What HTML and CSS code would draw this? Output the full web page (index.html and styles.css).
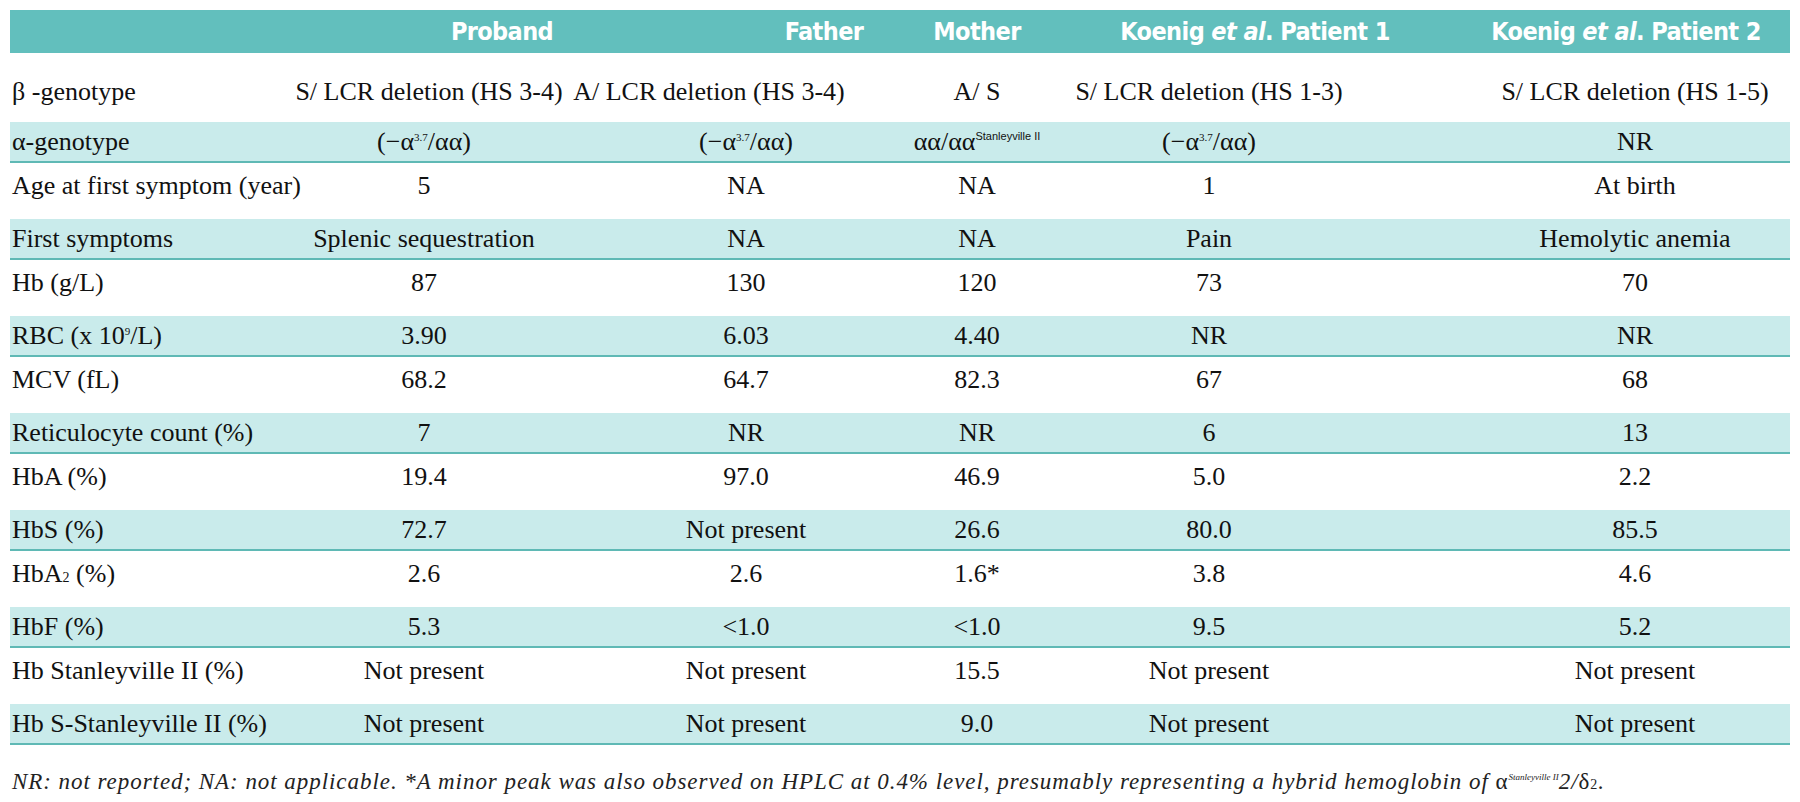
FILE: index.html
```html
<!DOCTYPE html>
<html lang="en">
<head>
<meta charset="utf-8">
<title>Table</title>
<link rel="stylesheet" href="styles.css">
</head>
<body>
<div class="page">
  <div class="table">
    <div class="row head">
      <div class="cell lab"></div>
      <div class="cell c1">Proband</div>
      <div class="cell c2">Father</div>
      <div class="cell c3">Mother</div>
      <div class="cell c4">Koenig <i>et al</i>. Patient 1</div>
      <div class="cell c5">Koenig <i>et al</i>. Patient 2</div>
    </div>
    <div class="row plain first">
      <div class="cell lab">β -genotype</div>
      <div class="cell c1 wide">S/ LCR deletion (HS 3-4)</div>
      <div class="cell c2 wide">A/ LCR deletion (HS 3-4)</div>
      <div class="cell c3">A/ S</div>
      <div class="cell c4">S/ LCR deletion (HS 1-3)</div>
      <div class="cell c5">S/ LCR deletion (HS 1-5)</div>
    </div>
    <div class="row shade">
      <div class="cell lab">α-genotype</div>
      <div class="cell c1">(−α<sup class="num">3.7</sup>/αα)</div>
      <div class="cell c2">(−α<sup class="num">3.7</sup>/αα)</div>
      <div class="cell c3">αα/αα<sup class="sans">Stanleyville II</sup></div>
      <div class="cell c4">(−α<sup class="num">3.7</sup>/αα)</div>
      <div class="cell c5">NR</div>
    </div>
    <div class="row plain">
      <div class="cell lab">Age at first symptom (year)</div>
      <div class="cell c1">5</div>
      <div class="cell c2">NA</div>
      <div class="cell c3">NA</div>
      <div class="cell c4">1</div>
      <div class="cell c5">At birth</div>
    </div>
    <div class="row shade">
      <div class="cell lab">First symptoms</div>
      <div class="cell c1">Splenic sequestration</div>
      <div class="cell c2">NA</div>
      <div class="cell c3">NA</div>
      <div class="cell c4">Pain</div>
      <div class="cell c5">Hemolytic anemia</div>
    </div>
    <div class="row plain">
      <div class="cell lab">Hb (g/L)</div>
      <div class="cell c1">87</div>
      <div class="cell c2">130</div>
      <div class="cell c3">120</div>
      <div class="cell c4">73</div>
      <div class="cell c5">70</div>
    </div>
    <div class="row shade">
      <div class="cell lab">RBC (x 10<sup class="num">9</sup>/L)</div>
      <div class="cell c1">3.90</div>
      <div class="cell c2">6.03</div>
      <div class="cell c3">4.40</div>
      <div class="cell c4">NR</div>
      <div class="cell c5">NR</div>
    </div>
    <div class="row plain">
      <div class="cell lab">MCV (fL)</div>
      <div class="cell c1">68.2</div>
      <div class="cell c2">64.7</div>
      <div class="cell c3">82.3</div>
      <div class="cell c4">67</div>
      <div class="cell c5">68</div>
    </div>
    <div class="row shade">
      <div class="cell lab">Reticulocyte count (%)</div>
      <div class="cell c1">7</div>
      <div class="cell c2">NR</div>
      <div class="cell c3">NR</div>
      <div class="cell c4">6</div>
      <div class="cell c5">13</div>
    </div>
    <div class="row plain">
      <div class="cell lab">HbA (%)</div>
      <div class="cell c1">19.4</div>
      <div class="cell c2">97.0</div>
      <div class="cell c3">46.9</div>
      <div class="cell c4">5.0</div>
      <div class="cell c5">2.2</div>
    </div>
    <div class="row shade">
      <div class="cell lab">HbS (%)</div>
      <div class="cell c1">72.7</div>
      <div class="cell c2">Not present</div>
      <div class="cell c3">26.6</div>
      <div class="cell c4">80.0</div>
      <div class="cell c5">85.5</div>
    </div>
    <div class="row plain">
      <div class="cell lab">HbA<span class="sub">2</span> (%)</div>
      <div class="cell c1">2.6</div>
      <div class="cell c2">2.6</div>
      <div class="cell c3">1.6*</div>
      <div class="cell c4">3.8</div>
      <div class="cell c5">4.6</div>
    </div>
    <div class="row shade">
      <div class="cell lab">HbF (%)</div>
      <div class="cell c1">5.3</div>
      <div class="cell c2">&lt;1.0</div>
      <div class="cell c3">&lt;1.0</div>
      <div class="cell c4">9.5</div>
      <div class="cell c5">5.2</div>
    </div>
    <div class="row plain">
      <div class="cell lab">Hb Stanleyville II (%)</div>
      <div class="cell c1">Not present</div>
      <div class="cell c2">Not present</div>
      <div class="cell c3">15.5</div>
      <div class="cell c4">Not present</div>
      <div class="cell c5">Not present</div>
    </div>
    <div class="row shade">
      <div class="cell lab">Hb S-Stanleyville II (%)</div>
      <div class="cell c1">Not present</div>
      <div class="cell c2">Not present</div>
      <div class="cell c3">9.0</div>
      <div class="cell c4">Not present</div>
      <div class="cell c5">Not present</div>
    </div>
  </div>
  <p class="note">NR: not reported; NA: not applicable. *A minor peak was also observed on HPLC at 0.4% level, presumably representing a hybrid hemoglobin of <span class="up">α</span><sup class="tiny">Stanleyville II</sup>2/<span class="up">δ</span><span class="sub2">2</span>.</p>
</div>
</body>
</html>
```

FILE: styles.css
```css
html, body {
  margin: 0;
  padding: 0;
  background: #ffffff;
}

.page {
  padding: 10px 10px 0 10px;
  width: 1780px;
}

.table {
  width: 1780px;
  font-family: "Liberation Serif", "Times New Roman", "DejaVu Serif", serif;
  font-size: 26px;
  color: #111111;
}

.row {
  display: grid;
  grid-template-columns: 280px 276px 340px 142px 372px 370px;
  box-sizing: border-box;
}

.cell {
  text-align: center;
  white-space: nowrap;
  min-width: 0;
}

.cell.lab {
  text-align: left;
  padding-left: 2px;
}

.head {
  height: 43px;
  background: #62bfbd;
}

.head .cell {
  font-family: "DejaVu Sans", "Liberation Sans", sans-serif;
  font-stretch: condensed;
  font-weight: bold;
  font-size: 25px;
  letter-spacing: -0.6px;
  line-height: 43px;
  color: #ffffff;
}

.head .c1 { padding-left: 148px; }
.head .c2 { padding-left: 176px; }
.head .c4 { padding-left: 42px; }
.head .c5 { padding-left: 42px; }

.plain {
  height: 56px;
  padding-top: 8px;
  line-height: 30px;
}

.plain.first {
  height: 69px;
  padding-top: 24px;
}

.shade {
  height: 41px;
  background: #c9ebeb;
  border-bottom: 2px solid #5fb9b5;
  line-height: 39px;
}

.plain .c1, .shade .c1 { padding-left: 2px; padding-right: 10px; }
.plain .c2, .shade .c2 { padding-left: 20px; }
.plain .c4, .shade .c4 { padding-right: 50px; }
.plain .c5, .shade .c5 { padding-left: 60px; }

.plain .c1.wide { padding-right: 0; }
.plain .c2.wide { padding-left: 0; padding-right: 54px; }

sup.num {
  font-size: 11px;
  line-height: 0;
  vertical-align: 9px;
}

sup.sans {
  font-family: "Liberation Sans", Arial, sans-serif;
  font-size: 11px;
  line-height: 0;
  vertical-align: 10px;
}

.sub {
  font-size: 14px;
  vertical-align: baseline;
}

.note {
  margin: 24px 0 0 2px;
  font-family: "Liberation Serif", "Times New Roman", "DejaVu Serif", serif;
  font-style: italic;
  font-size: 23px;
  letter-spacing: 0.95px;
  color: #222222;
  white-space: nowrap;
}

.note .up {
  font-style: normal;
}

.note sup.tiny {
  font-size: 9px;
  line-height: 0;
  vertical-align: 9px;
  letter-spacing: 0;
}

.note .sub2 {
  font-size: 14px;
  font-style: normal;
}
```
